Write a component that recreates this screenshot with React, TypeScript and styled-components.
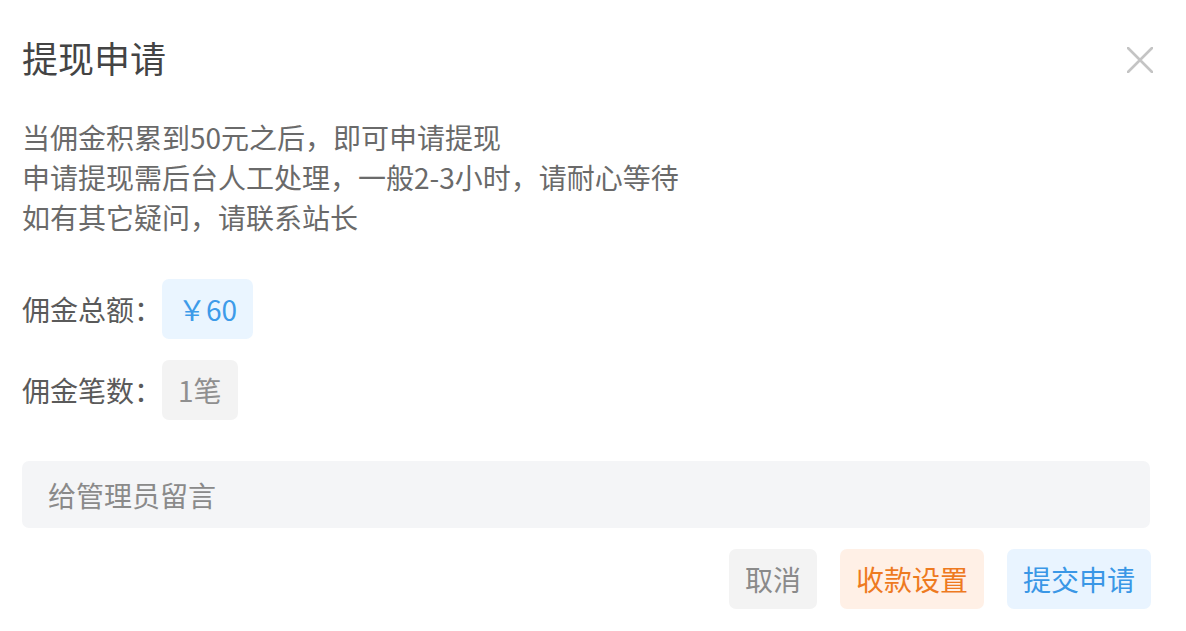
import React from "react";
import styled, { createGlobalStyle } from "styled-components";

const Global = createGlobalStyle`
  html, body { margin: 0; padding: 0; background: #ffffff; }
  body { font-family: "Noto Sans CJK SC", "Noto Sans", sans-serif; }
  * { box-sizing: border-box; }
`;

const Dialog = styled.div`
  width: 1186px;
  padding: 33px 36px 0 22px;
  display: flex;
  flex-direction: column;
`;

const Header = styled.div`
  display: flex;
  align-items: center;
  justify-content: space-between;
  height: 50px;
`;

const Title = styled.h1`
  margin: 0;
  margin-top: -2px;
  font-size: 36px;
  font-weight: 400;
  line-height: 50px;
  color: #444444;
`;

const Close = styled.button`
  border: 0;
  background: none;
  padding: 0;
  margin-right: -3px;
  margin-top: 4px;
  width: 26px;
  height: 26px;
  display: flex;
  cursor: pointer;
`;

const Notice = styled.div`
  margin-top: 34px;
  font-size: 28px;
  line-height: 40px;
  color: #6a6a6a;
`;

const InfoList = styled.div`
  margin-top: 42px;
  display: flex;
  flex-direction: column;
  gap: 21px;
`;

const InfoRow = styled.div`
  display: flex;
  align-items: center;
  height: 60px;
`;

const Label = styled.span`
  font-size: 28px;
  color: #5a5a5a;
`;

const Tag = styled.span<{ $tone: "blue" | "gray" }>`
  display: inline-flex;
  align-items: center;
  height: 60px;
  padding: 0 16px;
  border-radius: 7px;
  font-size: 28px;
  background: ${(p) => (p.$tone === "blue" ? "#eaf5ff" : "#f3f3f3")};
  color: ${(p) => (p.$tone === "blue" ? "#3d9be9" : "#8f8f8f")};
`;

const Message = styled.input`
  margin-top: 41px;
  height: 67px;
  width: 100%;
  border: 0;
  outline: none;
  border-radius: 7px;
  background: #f4f5f7;
  padding: 0 26px;
  font-family: inherit;
  font-size: 28px;
  color: #555;
  &::placeholder { color: #8a8a8a; }
`;

const Actions = styled.div`
  margin-top: 21px;
  display: flex;
  justify-content: flex-end;
  gap: 23px;
  margin-right: -1px;
`;

const Action = styled.button<{ $tone: "gray" | "orange" | "blue" }>`
  height: 60px;
  padding: 0 16px;
  border: 0;
  border-radius: 7px;
  font-family: inherit;
  font-size: 28px;
  cursor: pointer;
  background: ${(p) =>
    p.$tone === "gray" ? "#f3f3f3" : p.$tone === "orange" ? "#fff0e6" : "#e9f4ff"};
  color: ${(p) =>
    p.$tone === "gray" ? "#8a8a8a" : p.$tone === "orange" ? "#ee7a1f" : "#3a97e6"};
`;

export default function App() {
  return (
    <>
      <Global />
      <Dialog>
        <Header>
          <Title>提现申请</Title>
          <Close aria-label="关闭">
            <svg width="26" height="26" viewBox="0 0 26 26">
              <path d="M1 1 L25 25 M25 1 L1 25" stroke="#c4c4c4" strokeWidth="2.6" strokeLinecap="round" />
            </svg>
          </Close>
        </Header>
        <Notice>
          当佣金积累到50元之后，即可申请提现
          <br />
          申请提现需后台人工处理，一般2-3小时，请耐心等待
          <br />
          如有其它疑问，请联系站长
        </Notice>
        <InfoList>
          <InfoRow>
            <Label>佣金总额：</Label>
            <Tag $tone="blue">￥60</Tag>
          </InfoRow>
          <InfoRow>
            <Label>佣金笔数：</Label>
            <Tag $tone="gray">1笔</Tag>
          </InfoRow>
        </InfoList>
        <Message placeholder="给管理员留言" />
        <Actions>
          <Action $tone="gray">取消</Action>
          <Action $tone="orange">收款设置</Action>
          <Action $tone="blue">提交申请</Action>
        </Actions>
      </Dialog>
    </>
  );
}
